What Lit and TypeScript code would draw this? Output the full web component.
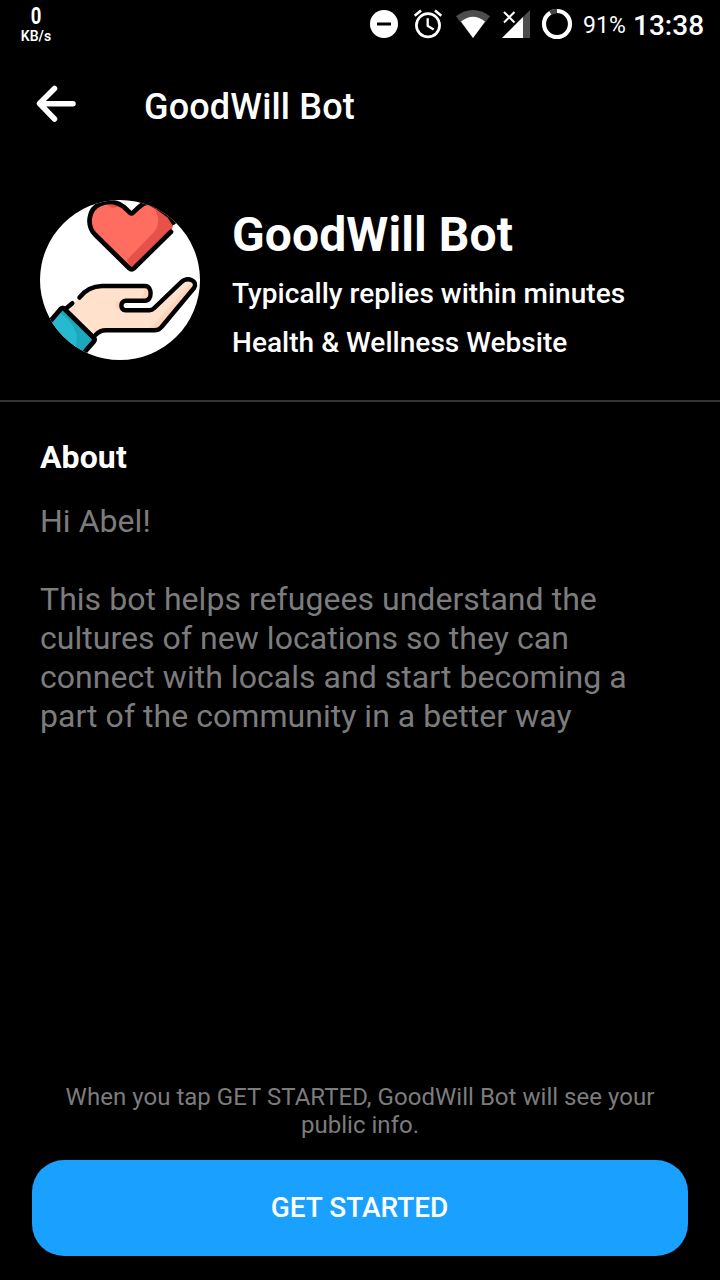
import { LitElement, html, css, svg } from "lit";
import { customElement, property } from "lit/decorators.js";

@customElement("status-bar")
class StatusBar extends LitElement {
  static styles = css`
    :host { display: flex; height: 50px; color: #fff; align-items: flex-start; }
    .net { width: 72px; padding-top: 9px; text-align: center; font-weight: 700; }
    .rate { font-size: 18.5px; line-height: 15px; height: 19px; }
    .rate span { display: block; height: 15px; transform: scaleY(1.3); }
    .unit { font-size: 14px; line-height: 16px; font-weight: 600; }
    .icons { margin-left: auto; display: block; }
    .pct { width: 50px; font-size: 23px; line-height: 51px; letter-spacing: 0.1px; white-space: nowrap; }
    .time { width: 87px; font-size: 28px; font-weight: 500; line-height: 51px; white-space: nowrap; }
  `;
  render() {
    return html`
      <div class="net"><div class="rate"><span>0</span></div><div class="unit">KB/s</div></div>
      <svg class="icons" width="223" height="50" viewBox="360 0 223 50">
        <circle cx="384" cy="24" r="14" fill="#fff"/>
        <rect x="377" y="22.5" width="14" height="3" fill="#000"/>
        <g fill="none" stroke="#fff" stroke-width="2.7">
          <circle cx="428" cy="25.3" r="11.6"/>
          <path d="M427.7 18.3v7.6l6 3.7" stroke-width="2.3"/>
          <path d="M414.7 15.7l6.3-5.2M435 10.5l6.3 5.2"/>
        </g>
        <path d="M456 16.2Q473 4 490 16.2L473 38z" fill="#4d4d4d"/>
        <path d="M461 21.5Q473 12 485 21.5L473 38z" fill="#fff"/>
        <path d="M530 10v28h-28z" fill="#4d4d4d"/>
        <path d="M523 17v21h-21z" fill="#fff"/>
        <path d="M504 12l10.500 10.500M514.500 12L504 22.500" stroke="#fff" stroke-width="2" fill="none"/>
        <circle cx="557" cy="24" r="13" fill="none" stroke="#fff" stroke-width="4.200"/>
        <path d="M550.300 12.860A13 13 0 0 1 557 11" fill="none" stroke="#444" stroke-width="4.400"/>
      </svg>
      <div class="pct">91%</div>
      <div class="time">13:38</div>
    `;
  }
}

const avatar = svg`
  <defs><clipPath id="disc"><circle cx="80" cy="80" r="80"/></clipPath></defs>
  <g clip-path="url(#disc)">
    <rect width="160" height="160" fill="#fff"/>
    <path d="M91.500 69.500L55.500 34C46 24 49.500 8 61 3.500C69 0 78 1 84 7L91.500 14L99 7C107 0 122 0 128 7C136 16 134 26 130 32z" fill="#ff6c60"/>
    <path d="M109 4C119 10 121 24 114 32L87 60L91.500 69.500L131 32L134 22L124 4z" fill="#e8514a"/>
    <path d="M67 4.500Q73 11 80 5Q73 1 67 4.500" fill="#e8514a"/>
    <path d="M131 31.800L94 68.200Q91.600 70.200 89.200 68.200L55 34.500C46 25 48.500 9 60 4C68 .5 77 1.500 84 7L90 12.800Q91.600 14 93 12.600L99 7Q103 3 108 2.500L118 7.500L129.500 16L133.500 22.500" fill="none" stroke="#000" stroke-width="4.700" stroke-linecap="round"/>
    <path d="M27 108Q34 104 39.500 97.500Q48 87 62 86H105C113 87 113 99.500 105 100.700H85C80 102 80 109 85 110.300H111.700L141.700 81.500C149 75.500 158 82 154 88L122 126Q119 130.300 114 130.300H66Q60 130.300 55 135z" fill="#ffe1cc"/>
    <path d="M105 86C113 87 113 99.500 105 100.700H99Q106 95 104 86zM85 100.700Q77 99 75 105Q77 111 85 110.300Q80 107 85 100.700M154 88L122 126Q119 130.300 114 130.300H100Q112 128 118 120L150 84z" fill="#ffd3b9"/>
    <path d="M39.400 97.600Q48 86.300 62 86H105C112.500 86 112.500 100.700 105 100.700H85.500C80 101 80 110.300 85.500 110.300H109.500Q112 110.300 114 108.300L141 82.300C148 76 158.500 81 154 88L121.500 127Q119 130.300 114.500 130.300H66Q60 130.300 55.500 135M26 108.500L32.300 103.200" fill="none" stroke="#000" stroke-width="4.400" stroke-linecap="round" stroke-linejoin="round"/>
    <path d="M22.500 107.500L54.800 139.200L42 154L30 158L0 122L10 121z" fill="#25bad0"/>
    <path d="M22.500 107.500L54.800 139.200L42 154L34 150Q40 139 34 128Q30 120 20 113z" fill="#1ba7bc"/>
    <path d="M10 121.500L20.500 109.200Q22.500 107 24.500 108.900L53.500 137.500Q55.500 139.500 53.700 141.600L43 154" fill="none" stroke="#000" stroke-width="4.800" stroke-linecap="round" stroke-linejoin="round"/>
  </g>`;

@customElement("bot-profile")
class BotProfile extends LitElement {
  @property() name = "";
  static styles = css`
    :host { display: flex; gap: 32px; padding: 40px; height: 240px; box-sizing: border-box; }
    .avatar { flex: none; display: block; }
    .info { display: flex; flex-direction: column; color: #fff; white-space: nowrap; }
    .name { margin: 6px 0 0; font-size: 48px; line-height: 58px; font-weight: 700; letter-spacing: 0.1px; }
    .line { font-size: 28px; line-height: 33px; font-weight: 500; margin-top: 13px; letter-spacing: 0.03px; }
    .line + .line { margin-top: 16px; }
  `;
  render() {
    return html`
      <svg class="avatar" width="160" height="160" viewBox="0 0 160 160">${avatar}</svg>
      <div class="info">
        <h1 class="name">${this.name}</h1>
        <div class="line">Typically replies within minutes</div>
        <div class="line">Health &amp; Wellness Website</div>
      </div>
    `;
  }
}

@customElement("app-root")
class AppRoot extends LitElement {
  static styles = css`
    :host { display: flex; flex-direction: column; height: 1280px; background: #000; font-family: Roboto, "Liberation Sans", sans-serif; overflow: hidden; }
    .bar { display: flex; height: 110px; color: #fff; align-items: center; }
    .back { display: block; margin: -2px 68px 0 36px; }
    .title { font-size: 36px; font-weight: 500; line-height: 42px; margin-top: 3px; letter-spacing: 0.16px; }
    .about { border-top: 2px solid #333; padding: 36px 40px 0; flex: 1; }
    .heading { margin: 0; color: #fff; font-size: 32px; line-height: 38px; font-weight: 700; letter-spacing: 0.1px; }
    .text { margin: 26px 0 0; color: #7c7c7c; font-size: 32px; line-height: 39px; white-space: pre-line; letter-spacing: 0.04px; }
    .foot { padding: 0 32px 24px; }
    .note { margin: 0 0 21px; color: #7c7c7c; font-size: 24px; line-height: 28px; text-align: center; letter-spacing: 0.03px; }
    .cta { display: block; width: 100%; height: 96px; border: 0; border-radius: 32px; background: #1aa1ff; color: #fff; font: 500 28px/33px Roboto, sans-serif; padding: 0 1px 2px 0; }
  `;
  render() {
    const name = "GoodWill Bot";
    const about = "Hi Abel!\n\nThis bot helps refugees understand the\ncultures of new locations so they can\nconnect with locals and start becoming a\npart of the community in a better way";
    return html`
      <status-bar></status-bar>
      <div class="bar">
        <svg class="back" width="40" height="40" viewBox="36 84 40 40" fill="none" stroke="#fff" stroke-width="5.500" stroke-linecap="round" stroke-linejoin="round">
          <path d="M54.500 88.500L39.500 103.500L54.500 119M40 103.700H73"/>
        </svg>
        <div class="title">${name}</div>
      </div>
      <bot-profile .name=${name}></bot-profile>
      <section class="about">
        <h2 class="heading">About</h2>
        <p class="text">${about}</p>
      </section>
      <div class="foot">
        <p class="note">When you tap GET STARTED, ${name} will see your<br>public info.</p>
        <button class="cta">GET STARTED</button>
      </div>
    `;
  }
}
